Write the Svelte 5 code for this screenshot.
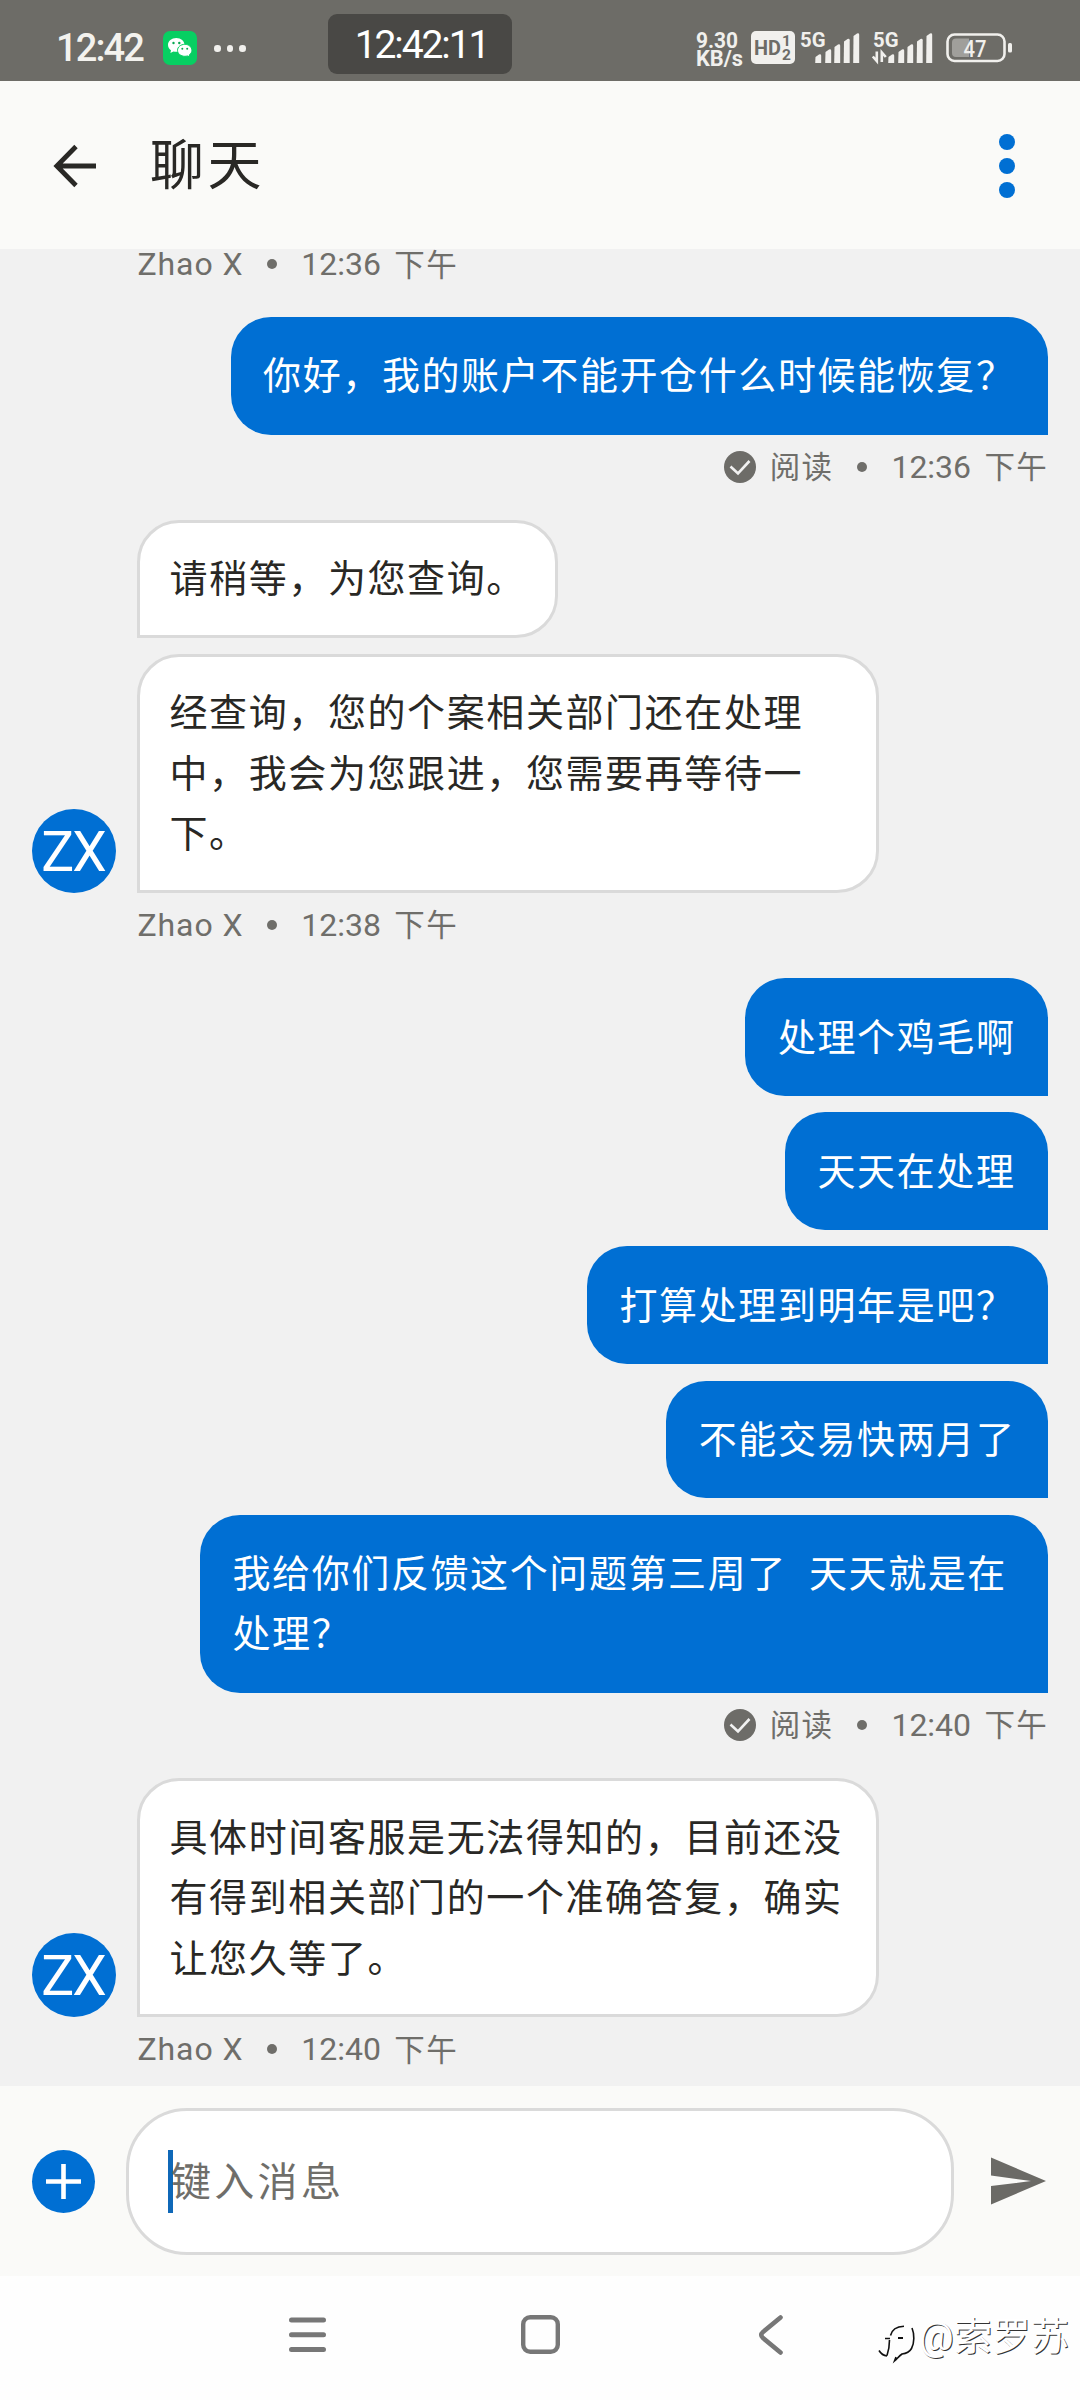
<script>
  const sender = 'Zhao X';
  const groups = [
    {
      mine: true,
      messages: [['你好，我的账户不能开仓什么时候能恢复？']],
      time: '12:36'
    },
    {
      mine: false,
      messages: [
        ['请稍等，为您查询。'],
        ['经查询，您的个案相关部门还在处理', '中，我会为您跟进，您需要再等待一', '下。']
      ],
      time: '12:38'
    },
    {
      mine: true,
      messages: [
        ['处理个鸡毛啊'],
        ['天天在处理'],
        ['打算处理到明年是吧？'],
        ['不能交易快两月了'],
        ['我给你们反馈这个问题第三周了  天天就是在', '处理？']
      ],
      time: '12:40'
    },
    {
      mine: false,
      messages: [
        ['具体时间客服是无法得知的，目前还没', '有得到相关部门的一个准确答复，确实', '让您久等了。']
      ],
      time: '12:40'
    }
  ];
  const bars = [
    { x: 0, y: 21 },
    { x: 10, y: 16 },
    { x: 19, y: 11 },
    { x: 28.5, y: 5.5 },
    { x: 38, y: 0 }
  ];
</script>

{#snippet meta(mine, time)}
  <div class="meta" class:right={mine}>
    {#if mine}
      <svg class="read" viewBox="0 0 32 32">
        <circle cx="16" cy="16" r="16" fill="#6d6c68" />
        <path d="M6.500 15.500l7.500 7 11.500-12.500" fill="none" stroke="#f1f1f1" stroke-width="2.600" />
      </svg>
      <span class="cn">阅读</span>
    {:else}
      <span class="who">{sender}</span>
    {/if}
    <i class="sep"></i>
    <span class="clock">{time}</span>
    <span class="cn">下午</span>
  </div>
{/snippet}

{#snippet signal(data)}
  <svg class="signal" viewBox="0 0 60 36" class:second={data}>
    <text x="0" y="16.500" textLength="25.500" lengthAdjust="spacingAndGlyphs">5G</text>
    {#each bars as b}
      <path d="M{b.x + 15.5} {b.y + 6}l3.500 -2.500q2.200 -.6 2.200 1.200V33h-6z" />
    {/each}
    {#if data}
      <path d="M3.800 21.500v9.500l-4-4.500M8.800 32v-9.500l4 4.500" fill="none" stroke="#f1f0ed" stroke-width="2.600" />
    {/if}
  </svg>
{/snippet}

<div class="screen">
  <div class="status">
    <span class="now">12:42</span>
    <svg class="wechat" viewBox="0 0 34 34">
      <rect width="34" height="34" rx="7" fill="#07cf62" />
      <path d="M13.300 7C8.600 7 5 10.200 5 14c0 2.200 1.200 4 3 5.300L7.400 22l3-1.600c1 .3 2 .4 3 .4C18 20.800 21.500 17.800 21.500 14S18 7 13.300 7z" fill="#fff" />
      <path d="M21.800 13.300c-4 0-7.300 2.700-7.300 6s3.300 6 7.300 6c.9 0 1.800-.1 2.600-.4l2.400 1.300-.6-2.200c1.700-1.100 2.700-2.800 2.700-4.700 0-3.300-3.200-6-7.100-6z" fill="#fff" stroke="#07cf62" stroke-width="1" />
      <g fill="#07a850">
        <circle cx="10.500" cy="12" r="1.200" /><circle cx="16.300" cy="12" r="1.200" />
        <circle cx="19.300" cy="17.800" r="1" /><circle cx="24.200" cy="17.800" r="1" />
      </g>
    </svg>
    <span class="more"><i></i><i></i><i></i></span>
    <span class="pill">12:42:11</span>
    <svg class="speed" viewBox="0 0 48 36">
      <text x="0" y="16.500" textLength="42" lengthAdjust="spacingAndGlyphs">9.30</text>
      <text x="0" y="35" textLength="47" lengthAdjust="spacingAndGlyphs">KB/s</text>
    </svg>
    <svg class="hd" viewBox="0 0 44 33">
      <rect width="44" height="33" rx="5" fill="#f1f0ed" />
      <text x="3" y="23.500" font-size="20" textLength="27" lengthAdjust="spacingAndGlyphs">HD</text>
      <text x="31" y="15" font-size="15.500">1</text>
      <text x="31" y="29" font-size="15.500">2</text>
    </svg>
    {@render signal(false)}
    {@render signal(true)}
    <svg class="battery" viewBox="0 0 68 30">
      <rect x="1.500" y="1.500" width="57" height="26.500" rx="7" fill="none" stroke="#f1f0ed" stroke-width="2.600" />
      <path d="M10 5.500h13v18.500H10q-4 0-4-4v-10.500q0-4 4-4z" fill="#a09f9b" />
      <rect x="62" y="10" width="4" height="9.500" rx="1.500" fill="#f1f0ed" />
      <text x="17.500" y="23.500" textLength="23" lengthAdjust="spacingAndGlyphs">47</text>
    </svg>
  </div>

  <header>
    <svg class="back" viewBox="0 0 42 42">
      <path d="M42 21H3M22 1.500L2.800 21 22 40.500" fill="none" stroke="#292825" stroke-width="4.800" />
    </svg>
    <h1>聊天</h1>
    <span class="kebab"><i></i><i></i><i></i></span>
  </header>

  <main>
    <div class="first">{@render meta(false, '12:36')}</div>
    {#each groups as g}
      <section class:mine={g.mine}>
        <div class="body">
          {#if !g.mine}<span class="avatar">ZX</span>{/if}
          <div class="stack">
            {#each g.messages as lines}
              <div class="bubble" class:wide={lines.length > 1}>
                {#each lines as line}<p>{line}</p>{/each}
              </div>
            {/each}
          </div>
        </div>
        {@render meta(g.mine, g.time)}
      </section>
    {/each}
  </main>

  <footer>
    <svg class="plus" viewBox="0 0 63 63">
      <circle cx="31.500" cy="31.500" r="31.500" fill="#006fd3" />
      <path d="M31.500 14v35M14 31.500h35" stroke="#fff" stroke-width="4.600" />
    </svg>
    <div class="input"><i class="caret"></i><span>键入消息</span></div>
    <svg class="send" viewBox="0 0 55 48">
      <path d="M0 .500L55 24 0 47.500V29l40-5L0 18.500z" fill="#6b6a66" />
    </svg>
  </footer>

  <nav>
    <svg class="menu" viewBox="0 0 37 36">
      <path d="M2.500 3h32M2.500 17.800h32M2.500 32.500h32" stroke="#777" stroke-width="5" stroke-linecap="round" />
    </svg>
    <svg class="home" viewBox="0 0 39 39">
      <rect x="2.200" y="2.200" width="34.600" height="34.600" rx="7" fill="none" stroke="#777" stroke-width="4.400" />
    </svg>
    <svg class="prev" viewBox="0 0 24 40">
      <path d="M21.500 2.500L4 17q-3.500 3 0 6l17.500 14.500" fill="none" stroke="#777" stroke-width="4.600" stroke-linecap="round" />
    </svg>
    <div class="mark">
      <svg viewBox="0 0 37 38">
        <g fill="none" stroke="#111" stroke-width="1.600">
          <path d="M11.500 10.500C13 4 17 1.500 25 1.200M6 13.500h5M10.500 15c0 7-1 11-2.500 15.500M0 25.500q3 5 8 5.500" />
          <path d="M33 3c2.500 6 2.500 15-.5 20.500-2 3.500-5 5-9.500 5.500-3.500 2.500-5 5-7.500 7l1.500-4" />
          <path d="M19 13h5" stroke-width="2" />
        </g>
      </svg>
      <span>@索罗苏</span>
    </div>
  </nav>
</div>

<style>
  :global(body) { margin: 0; background: #fefefe; }
  .screen {
    width: 1080px; height: 2400px; display: flex; flex-direction: column; overflow: hidden;
    font-family: Roboto, "Noto Sans CJK SC", sans-serif; background: #fefefe;
  }
  svg { display: block; flex: none; overflow: visible; }
  i { display: block; flex: none; }

  .status { height: 81px; flex: none; display: flex; align-items: flex-start; background: #6d6c67; color: #f3f2ee; }
  .now { margin: 27px 0 0 56px; width: 107px; font-size: 38px; line-height: 42px; font-weight: 500; letter-spacing: -1.900px; }
  .wechat { width: 34px; height: 34px; margin-top: 31px; }
  .more { display: flex; gap: 6px; margin: 45px 0 0 17px; width: 114px; }
  .more i { width: 6.500px; height: 6.500px; border-radius: 50%; background: #f1f0ed; }
  .pill {
    box-sizing: border-box; width: 184px; height: 60px; margin-top: 14px; padding-left: 3px; border-radius: 9px; background: #494845; color: #fff;
    font-size: 39px; line-height: 62px; text-align: center; letter-spacing: -2.100px;
  }
  .speed { width: 48px; height: 36px; margin: 31px 0 0 184px; fill: #f1f0ed; }
  .speed text { font-size: 22px; font-weight: 700; }
  .hd { width: 44px; height: 33px; margin: 31px 0 0 7px; }
  .hd text { font-weight: 700; fill: #6d6c67; }
  .signal { width: 60px; height: 36px; margin: 30px 0 0 5px; fill: #f1f0ed; }
  .signal.second { margin-left: 12.500px; }
  .signal text { font-size: 21px; font-weight: 700; }
  .battery { width: 68px; height: 30px; margin: 33px 0 0 13px; }
  .battery text { font-size: 23px; font-weight: 500; fill: #f1f0ed; }

  header { height: 168px; flex: none; display: flex; align-items: center; background: #fafaf8; }
  .back { width: 42px; height: 42px; margin: 2px 0 0 54px; }
  h1 { flex: 1; margin: 4px 0 0 54px; font-size: 54px; line-height: 80px; font-weight: 400; letter-spacing: 3.500px; color: #292825; }
  .kebab { display: flex; flex-direction: column; gap: 7.800px; margin: 2px 65px 0 0; }
  .kebab i { width: 16px; height: 16px; border-radius: 50%; background: #006fd3; }

  main { height: 1837px; flex: none; overflow: hidden; background: #f1f1f1; }
  .first { height: 68px; }
  .first .meta { height: 30px; margin-top: 0; }
  section { padding: 0 32px; margin-bottom: 29.300px; }
  .body { display: flex; align-items: flex-end; }
  .avatar {
    flex: none; width: 84px; height: 84px; margin-right: 21px; border-radius: 50%; background: #006fd3; color: #fff;
    font-size: 55px; line-height: 86px; text-align: center; letter-spacing: -2px; text-indent: -2px;
  }
  .stack { display: flex; flex: 1; flex-direction: column; gap: 16.300px; align-items: flex-start; }
  .mine .stack { align-items: flex-end; }
  .bubble {
    box-sizing: border-box; padding: 26.300px 29.500px 25px; border: 3px solid #dadada; border-radius: 42px 42px 42px 0;
    background: #fff; color: #292825;
  }
  .bubble.wide { width: 742px; }
  .mine .bubble { padding: 29.300px 32.500px 28px; border: 0; border-radius: 40px 40px 0 40px; background: #006fd3; color: #fff; }
  .mine .bubble.wide { width: 848px; }
  p { margin: 0; font-size: 38px; line-height: 60.500px; letter-spacing: 1.600px; white-space: pre; }

  .meta { display: flex; align-items: center; height: 48px; margin-top: 8px; padding-left: 105.500px; color: #6f6e6a; font-size: 32px; }
  .first .meta { padding-left: 137.500px; }
  .meta.right { justify-content: flex-end; padding: 0; }
  .who { letter-spacing: .9px; }
  .sep { width: 10px; height: 10px; margin: 0 24px; border-radius: 50%; background: currentColor; }
  .clock { width: 93px; }
  .cn { font-size: 30.500px; letter-spacing: 1.300px; margin-top: -3px; }
  .read { width: 32px; height: 32px; margin-right: 14px; }

  footer { height: 190px; flex: none; display: flex; align-items: center; background: #fafaf8; }
  .plus { width: 63px; height: 63px; margin-left: 32px; }
  .input {
    box-sizing: border-box; width: 828px; height: 147px; margin-left: 31px; padding-left: 39px; display: flex; align-items: center;
    border: 3px solid #dadada; border-radius: 61px; background: #fff; color: #6f6e6a; font-size: 40px; letter-spacing: 3.300px;
  }
  .caret { width: 5px; height: 63px; background: #0f68b8; }
  .input span { margin: -4px 0 0 -2px; }
  .send { width: 55px; height: 48px; margin-left: 37px; }

  nav { height: 124px; flex: none; display: flex; align-items: flex-start; background: #fefefe; }
  .menu { width: 37px; height: 36px; margin: 41px 0 0 289px; }
  .home { width: 39px; height: 39px; margin: 39px 0 0 194.500px; }
  .prev { width: 24px; height: 40px; margin: 39px 0 0 199.500px; }
  .mark { display: flex; margin: 40px 0 0 96px; }
  .mark svg { width: 37px; height: 38px; margin-top: 9px; }
  .mark span {
    margin-left: 3px; color: #fff; font-size: 38.500px; line-height: 42px; font-weight: 400; white-space: nowrap;
    text-shadow: 1px 1px 0 #333;
  }
</style>
